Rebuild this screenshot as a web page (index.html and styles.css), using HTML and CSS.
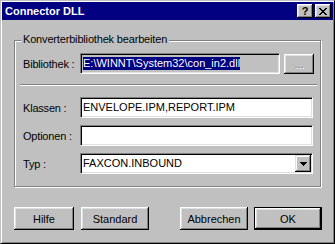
FILE: index.html
```html
<!DOCTYPE html>
<html lang="de">
<head>
    <meta charset="UTF-8">
    <title>Connector DLL</title>
    <link rel="stylesheet" href="styles.css">
</head>
<body>
    <div class="window">
        <div class="titlebar">
            <span class="title">Connector DLL</span>
            <div class="caption-buttons">
                <span class="cap-btn help">?</span>
                <span class="cap-btn">
                    <svg width="8" height="7" viewBox="0 0 8 7" shape-rendering="crispEdges">
                        <path d="M0 0h2v1H0z M6 0h2v1H6z M1 1h2v1H1z M5 1h2v1H5z M2 2h4v1H2z M3 3h2v1H3z M2 4h4v1H2z M1 5h2v1H1z M5 5h2v1H5z M0 6h2v1H0z M6 6h2v1H6z" fill="#000"/>
                    </svg>
                </span>
            </div>
        </div>

        <div class="dialog-body">
            <div class="group">
                <span class="group-title">Konverterbibliothek bearbeiten</span>

                <div class="row">
                    <label class="label">Bibliothek :</label>
                    <div class="edit readonly lib"><span class="selected">E:\WINNT\System32\con_in2.dll</span></div>
                    <button class="btn browse" disabled>...</button>
                </div>

                <div class="sep"></div>

                <div class="row">
                    <label class="label">Klassen :</label>
                    <div class="edit">ENVELOPE.IPM,REPORT.IPM</div>
                </div>

                <div class="row">
                    <label class="label">Optionen :</label>
                    <div class="edit"></div>
                </div>

                <div class="row">
                    <label class="label">Typ :</label>
                    <div class="edit combo">
                        <span class="combo-text">FAXCON.INBOUND</span>
                        <span class="combo-btn">
                            <svg width="7" height="4" viewBox="0 0 7 4" shape-rendering="crispEdges">
                                <path d="M0 0h7v1H0z M1 1h5v1H1z M2 2h3v1H2z M3 3h1v1H3z" fill="#000"/>
                            </svg>
                        </span>
                    </div>
                </div>
            </div>

            <div class="buttons">
                <button class="btn hilfe">Hilfe</button>
                <button class="btn">Standard</button>
                <span class="spacer"></span>
                <button class="btn">Abbrechen</button>
                <button class="btn default">OK</button>
            </div>
        </div>
    </div>
</body>
</html>
```

FILE: styles.css
```css
* {
    box-sizing: border-box;
}
body {
    margin: 0;
    background-color: #c0c0c0;
    font-family: "Liberation Sans", Arial, sans-serif;
    font-size: 11px;
    color: #000;
}
.window {
    width: 335px;
    height: 244px;
    padding: 1px;
    background-color: #c0c0c0;
    border: 1px solid;
    border-color: #c0c0c0 #000 #000 #c0c0c0;
    box-shadow: inset 1px 1px #fff, inset -1px -1px #808080;
    display: flex;
    flex-direction: column;
}
.titlebar {
    height: 18px;
    background-color: #000080;
    color: #fff;
    display: flex;
    align-items: center;
    justify-content: space-between;
    padding: 0 2px 0 3px;
}
.title {
    font-weight: bold;
    font-size: 11px;
}
.caption-buttons {
    display: flex;
    gap: 2px;
}
.cap-btn {
    width: 16px;
    height: 14px;
    background-color: #c0c0c0;
    color: #000;
    display: flex;
    align-items: center;
    justify-content: center;
    box-shadow: inset -1px -1px #000, inset 1px 1px #fff, inset -2px -2px #808080, inset 2px 2px #dfdfdf;
}
.cap-btn.help {
    font-weight: bold;
    font-size: 11px;
    line-height: 14px;
}
.dialog-body {
    flex: 1;
    padding: 20px 12px 0 12px;
}
.group {
    position: relative;
    height: 147px;
    border: 1px solid #808080;
    box-shadow: 1px 1px #fff, inset 1px 1px #fff;
    padding: 12px 7px 12px 8px;
    display: flex;
    flex-direction: column;
    gap: 7px;
}
.group-title {
    position: absolute;
    top: -8px;
    left: 6px;
    padding: 0 2px;
    line-height: 13px;
    letter-spacing: -0.17px;
    background-color: #c0c0c0;
}
.row {
    display: flex;
    align-items: center;
    height: 21px;
}
.label {
    width: 57px;
    flex-shrink: 0;
    letter-spacing: -0.2px;
}
.edit {
    flex: 1;
    height: 21px;
    background-color: #fff;
    border: 1px solid;
    border-color: #808080 #fff #fff #808080;
    box-shadow: inset 1px 1px #000, inset -1px -1px #dfdfdf;
    padding: 0 1px 0 2px;
    line-height: 13px;
    display: flex;
    align-items: center;
    white-space: nowrap;
    overflow: hidden;
}
.edit.readonly {
    background-color: #c0c0c0;
}
.edit.lib {
    flex: none;
    width: 200px;
    margin-right: 4px;
}
.selected {
    background-color: #000080;
    color: #fff;
}
.sep {
    height: 2px;
    margin: 3px -4px 4px -3px;
    border-top: 1px solid #808080;
    border-bottom: 1px solid #fff;
}
.combo {
    padding-right: 1px;
}
.combo-text {
    flex: 1;
}
.combo-btn {
    width: 16px;
    height: 17px;
    background-color: #c0c0c0;
    display: flex;
    align-items: center;
    justify-content: center;
    box-shadow: inset -1px -1px #000, inset 1px 1px #dfdfdf, inset -2px -2px #808080, inset 2px 2px #fff;
}
.btn {
    font-family: "Liberation Sans", Arial, sans-serif;
    font-size: 11px;
    color: #000;
    background-color: #c0c0c0;
    border: none;
    padding: 0;
    width: 68px;
    height: 23px;
    box-shadow: inset -1px -1px #000, inset 1px 1px #fff, inset -2px -2px #808080, inset 2px 2px #dfdfdf;
}
.btn.browse {
    width: 30px;
    height: 20px;
    flex-shrink: 0;
    color: #808080;
    text-shadow: 1px 1px #fff;
}
.btn.default {
    border: 1px solid #000;
}
.buttons {
    display: flex;
    margin-top: 20px;
    margin-right: -1px;
    gap: 7px;
}
.btn.default {
    margin-left: -1px;
}
.btn.hilfe {
    width: 60px;
}
.spacer {
    flex: 1;
}
```
